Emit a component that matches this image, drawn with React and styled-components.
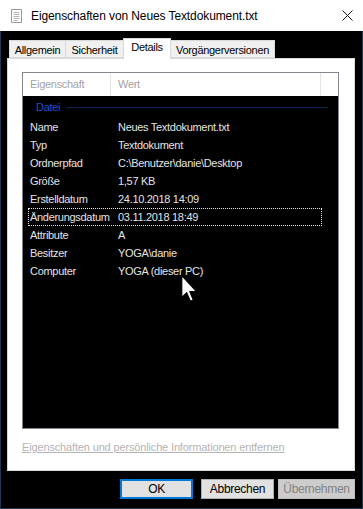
import React from 'react';
import styled, { createGlobalStyle } from 'styled-components';

const GlobalStyle = createGlobalStyle`
  html, body {
    margin: 0;
    padding: 0;
    background: #000;
  }
  * {
    box-sizing: border-box;
  }
`;

const rows = [
  ['Name', 'Neues Textdokument.txt'],
  ['Typ', 'Textdokument'],
  ['Ordnerpfad', 'C:\\Benutzer\\danie\\Desktop'],
  ['Größe', '1,57 KB'],
  ['Erstelldatum', '24.10.2018 14:09'],
  ['Änderungsdatum', '03.11.2018 18:49'],
  ['Attribute', 'A'],
  ['Besitzer', 'YOGA\\danie'],
  ['Computer', 'YOGA (dieser PC)'],
];

const tabs = [
  ['Allgemein', 57],
  ['Sicherheit', 59],
  ['Details', 48],
  ['Vorgängerversionen', 105],
];

const App = () => {
  return (
    <>
      <GlobalStyle />
      <Window>
        <TitleBar>
          <DocIcon width='11' height='14' viewBox='0 0 11 14'>
            <path d='M0.5 0.5 H10.5 V13.5 H0.5 Z' fill='#fff' stroke='#9a9a9a' />
            <path d='M2.5 3.5 H8.5 M2.5 5.5 H8.5 M2.5 7.5 H8.5 M2.5 9.5 H8.5 M2.5 11.5 H6.5' stroke='#b4b4b4' />
          </DocIcon>
          <Title>Eigenschaften von Neues Textdokument.txt</Title>
          <CloseIcon width='11' height='11' viewBox='0 0 11 11'>
            <path d='M0.5 0.5 L10.5 10.5 M10.5 0.5 L0.5 10.5' stroke='#111' strokeWidth='1' />
          </CloseIcon>
        </TitleBar>
        <Body>
          <TabRow>
            {tabs.map(([t, w]) => (
              <Tab key={t} $w={w} $active={t === 'Details'}>
                {t}
              </Tab>
            ))}
          </TabRow>
          <Panel>
            <List>
              <Header>
                <HeadCell $w={88}>Eigenschaft</HeadCell>
                <HeadCell $w={210}>Wert</HeadCell>
                <HeadCell $w={16} />
              </Header>
              <Group>
                <GroupLabel>Datei</GroupLabel>
                <GroupLine />
              </Group>
              {rows.map(([k, v]) => (
                <Row key={k} $focus={k === 'Änderungsdatum'}>
                  <Label>{k}</Label>
                  <Value>{v}</Value>
                </Row>
              ))}
              <Cursor width='17' height='28' viewBox='0 0 12 20'>
                <path
                  d='M0.5 0.5 L0.5 16 L4 12.6 L6.6 18.8 L8.7 17.9 L6.2 11.8 L11 11.8 Z'
                  fill='#fff'
                  stroke='#000'
                  strokeWidth='0.8'
                  strokeLinejoin='round'
                />
              </Cursor>
            </List>
            <Link>Eigenschaften und persönliche Informationen entfernen</Link>
          </Panel>
          <ButtonRow>
            <Button $w={73} $primary>OK</Button>
            <Button $w={73} $ml={8}>Abbrechen</Button>
            <Button $w={77} $ml={4} $disabled>Übernehmen</Button>
          </ButtonRow>
        </Body>
      </Window>
    </>
  );
};

export default App;

const Window = styled.div`
  width: 363px;
  height: 509px;
  display: flex;
  flex-direction: column;
  font-family: 'Liberation Sans', Arial, sans-serif;
  font-size: 11px;
  letter-spacing: -0.3px;
  background: #000;
`;

const TitleBar = styled.div`
  height: 31px;
  background: #fff;
  display: flex;
  align-items: center;
  padding: 0 10px 0 11px;
`;

const DocIcon = styled.svg`
  flex-shrink: 0;
`;

const Title = styled.span`
  margin-left: 9px;
  font-size: 12px;
  letter-spacing: -0.1px;
  color: #000;
  flex: 1;
`;

const CloseIcon = styled.svg`
  flex-shrink: 0;
`;

const Body = styled.div`
  flex: 1;
  display: flex;
  flex-direction: column;
  border: 1px solid #1f3650;
  border-top: none;
  padding: 7px 7px 0 6px;
`;

const TabRow = styled.div`
  display: flex;
  align-items: flex-end;
  height: 20px;
  padding-left: 3px;
  position: relative;
  z-index: 1;
`;

const Tab = styled.div`
  width: ${p => p.$w}px;
  height: ${p => (p.$active ? '21px' : '18px')};
  margin-bottom: ${p => (p.$active ? '-1px' : '0')};
  padding-top: ${p => (p.$active ? '2px' : '3px')};
  text-align: center;
  background: ${p => (p.$active ? '#fff' : '#f0f0f0')};
  border: 1px solid #d9d9d9;
  border-bottom: ${p => (p.$active ? 'none' : '1px solid #d9d9d9')};
  margin-left: -1px;
  color: #000;
  white-space: nowrap;
  flex-shrink: 0;
`;

const Panel = styled.div`
  height: 413px;
  background: #fff;
  border: 1px solid #d9d9d9;
  padding: 13px 15px 0 14px;
  display: flex;
  flex-direction: column;
`;

const List = styled.div`
  position: relative;
  width: 317px;
  height: 357px;
  border: 1px solid #828790;
  background: #000;
  overflow: hidden;
`;

const Header = styled.div`
  display: flex;
  height: 23px;
  background: #fff;
`;

const HeadCell = styled.div`
  width: ${p => p.$w}px;
  border-right: 1px solid #e5e5e5;
  padding: 5px 0 0 7px;
  color: #a3a3a3;
  flex-shrink: 0;
  &:last-child {
    border-right: none;
    flex: 1;
  }
`;

const Group = styled.div`
  height: 22px;
  display: flex;
  align-items: center;
  padding: 0 10px 0 13px;
`;

const GroupLabel = styled.span`
  color: #1f4fc8;
`;

const GroupLine = styled.div`
  flex: 1;
  height: 1px;
  margin-left: 7px;
  background: #0e2356;
`;

const Row = styled.div`
  display: grid;
  grid-template-columns: 82px 1fr;
  align-items: center;
  width: 294px;
  height: 18px;
  margin-left: 5px;
  border: 1px dotted ${p => (p.$focus ? '#e8e8e8' : 'transparent')};
  color: #e4e4e4;
  white-space: nowrap;
`;

const Label = styled.span`
  padding-left: 1px;
`;

const Value = styled.span`
  padding-left: 7px;
`;

const Cursor = styled.svg`
  position: absolute;
  left: 158px;
  top: 202px;
`;

const Link = styled.span`
  margin-top: 12px;
  color: #b3b3b3;
  text-decoration: underline;
  line-height: 13px;
  letter-spacing: -0.15px;
  white-space: nowrap;
`;

const ButtonRow = styled.div`
  display: flex;
  justify-content: flex-end;
  margin-top: 8px;
`;

const Button = styled.div`
  width: ${p => p.$w}px;
  height: 20px;
  margin-left: ${p => p.$ml || 0}px;
  display: flex;
  align-items: center;
  justify-content: center;
  background: ${p => (p.$disabled ? '#cccccc' : '#e1e1e1')};
  border: ${p =>
    p.$primary ? '2px solid #0078d7' : p.$disabled ? '1px solid #bfbfbf' : '1px solid #adadad'};
  color: ${p => (p.$disabled ? '#838383' : '#000')};
  font-size: 12px;
`;
